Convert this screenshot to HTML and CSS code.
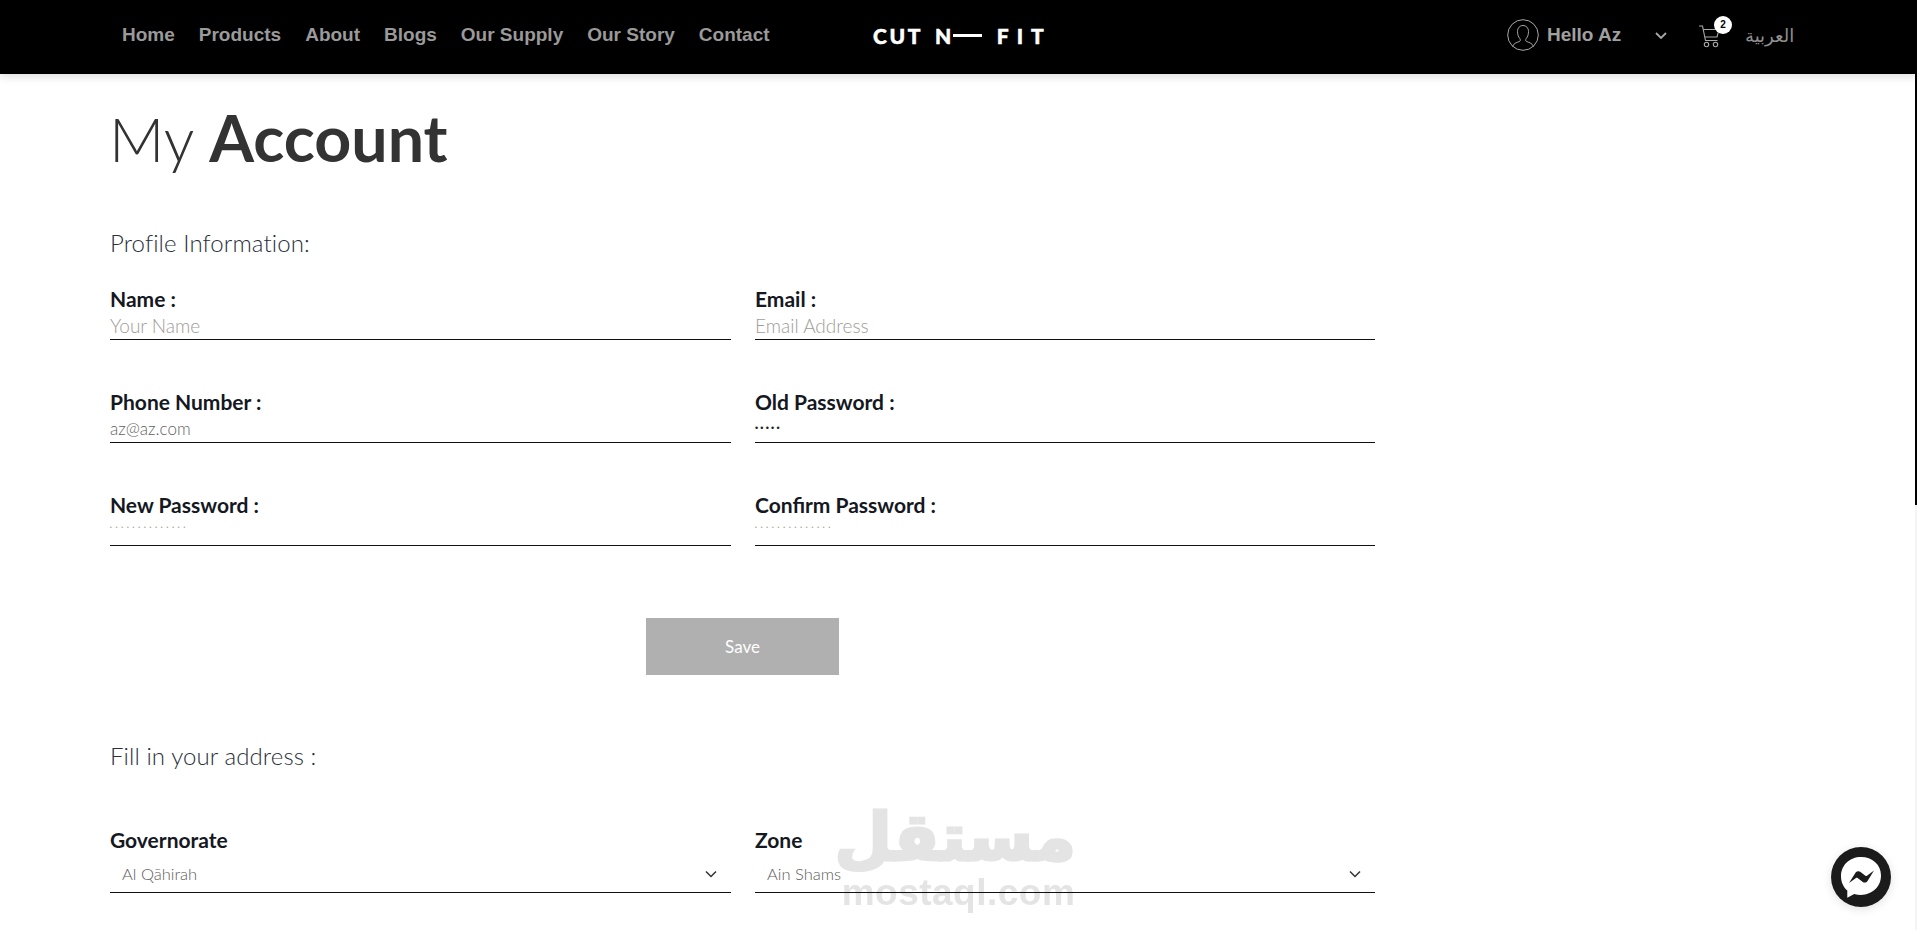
FILE: index.html
```html
<!DOCTYPE html>
<html lang="en">
<head>
<meta charset="utf-8">
<title>My Account</title>
<link rel="stylesheet" href="styles.css">
</head>
<body>
<header class="topbar">
  <nav class="nav">
    <a>Home</a><a>Products</a><a>About</a><a>Blogs</a><a>Our Supply</a><a>Our Story</a><a>Contact</a>
  </nav>
  <div class="logo"><span>CUT</span><span class="logo-n">N</span><i class="logo-dash"></i><span class="logo-fit">FIT</span></div>
  <div class="tools">
    <svg class="avatar" width="32" height="32" viewBox="0 0 32 32" fill="none" stroke="#a8a8a8" stroke-width="1"><circle cx="16" cy="16" r="15.3"/><path d="M5.5 27.5c1-3 4-4 7-5 1-.5 1-2 .3-3-1.500-1.800-2.300-4-2.300-7 0-3.500 2.300-6 5.500-6s5.500 2.500 5.500 6c0 3-.8 5.200-2.300 7-.7 1-.7 2.500.3 3 3 1 6 2 7 5"/></svg>
    <span class="hello">Hello Az</span>
    <svg class="chev" width="12" height="7" viewBox="0 0 12 7" fill="none" stroke="#a8a8a8" stroke-width="1.800"><path d="M1 1l5 5 5-5"/></svg>
    <span class="cart">
      <svg width="21" height="23" viewBox="0 0 21 23" fill="none" stroke="#a8a8a8" stroke-width="1.100"><path d="M0 1h3.500l3 14.500h12"/><path d="M4.200 4.500H20l-2 7.500H5.800"/><circle cx="7.500" cy="19.500" r="2.200"/><circle cx="16.500" cy="19.500" r="2.200"/></svg>
      <b class="badge">2</b>
    </span>
    <span class="lang" lang="ar" dir="rtl">العربية</span>
  </div>
</header>

<main class="page">
  <h1 class="title"><span class="title-light">My</span> <strong>Account</strong></h1>
  <h2 class="section section-profile">Profile Information:</h2>
  <div class="form-grid">
    <div class="field"><label>Name :</label><div class="input placeholder">Your Name</div></div>
    <div class="field"><label>Email :</label><div class="input placeholder">Email Address</div></div>
    <div class="field"><label>Phone Number :</label><div class="input value">az@az.com</div></div>
    <div class="field"><label>Old Password :</label><div class="input dots-dark">•••••</div></div>
    <div class="field"><label>New Password :</label><div class="input dots-light">••••••••••••••</div></div>
    <div class="field"><label>Confirm Password :</label><div class="input dots-light">••••••••••••••</div></div>
  </div>
  <div class="save-row"><button class="save">Save</button></div>
  <h2 class="section section-address">Fill in your address :</h2>
  <div class="form-grid form-grid-address">
    <div class="field"><label>Governorate</label><div class="input select"><span>Al Qāhirah</span><svg width="12" height="8" viewBox="0 0 12 8" fill="none" stroke="#333" stroke-width="1.500"><path d="M1 1.500l5 5 5-5"/></svg></div></div>
    <div class="field"><label>Zone</label><div class="input select"><span>Ain Shams</span><svg width="12" height="8" viewBox="0 0 12 8" fill="none" stroke="#333" stroke-width="1.500"><path d="M1 1.500l5 5 5-5"/></svg></div></div>
  </div>
</main>

<div class="watermark"><div class="wm-ar" lang="ar" dir="rtl">مستقل</div><div class="wm-en">mostaql.com</div></div>

<div class="messenger">
  <svg width="60" height="60" viewBox="0 0 60 60"><circle cx="30" cy="30" r="30" fill="#1b1b1b"/><path d="M30 10C18.700 10 10 18.200 10 29.300c0 5.800 2.400 10.800 6.300 14.300v7.200l6.900-3.800c2.100.6 4.400.9 6.800.9 11.300 0 20-8.200 20-19.300S41.300 10 30 10z" fill="#fff"/><path d="M18 36l6.500-10.300c1-1.600 3.200-2 4.700-.9l5.200 3.900c.5.400 1.100.4 1.600 0L43 23.600 36.500 34c-1 1.600-3.200 2-4.700.9l-5.200-3.900c-.5-.4-1.100-.4-1.600 0z" fill="#1b1b1b"/></svg>
</div>
<div class="scroll-track"><div class="scroll-thumb"></div></div>
</body>
</html>
```
FILE: styles.css
```css
* { box-sizing: border-box; }
html, body { margin: 0; height: 930px; overflow: hidden; background: #fff; }
body { font-family: "Lato", "Open Sans", sans-serif; color: #1c1c1c; }

.topbar {
  height: 74px;
  background: #000;
  display: flex;
  align-items: center;
  padding: 0 0 4px 122px;
  box-shadow: 0 3px 8px rgba(0,0,0,.12);
  position: relative;
}
.nav { display: flex; gap: 24px; width: 751px; font: 700 19px "Liberation Sans", sans-serif; color: #9a9a9a; }
.logo { display: flex; align-items: center; width: 634px; font: 900 21px "Lato", sans-serif; color: #fff; letter-spacing: 2.600px; -webkit-text-stroke: .5px #fff; }
.logo-n { margin-left: 12px; }
.logo-dash { width: 29px; height: 3px; background: #fff; margin-left: -1px; }
.logo-fit { margin-left: 15px; letter-spacing: 8px; }
.tools { display: flex; align-items: center; color: #a0a0a0; }
.avatar { margin-right: 8px; }
.hello { font: 700 19px "Liberation Sans", sans-serif; width: 108px; }
.chev { margin-right: 32px; }
.cart { position: relative; display: block; width: 46px; height: 23px; margin-top: 2px; }
.badge {
  position: absolute; left: 15px; top: -9px;
  width: 18px; height: 18px; border-radius: 50%;
  background: #fff; color: #000;
  font: 700 10px/18px "Liberation Sans", sans-serif; text-align: center;
}
.lang { font: 400 18px "DejaVu Sans", sans-serif; color: #8f8f8f; }

.page { padding: 0 0 0 110px; width: 1376px; }
.title { margin: 28px 0 0 -1px; height: 70px; font-size: 61px; line-height: 70px; font-weight: 300; color: #333; white-space: nowrap; }
.title strong { font-weight: 700; font-size: 64.500px; }
.section { margin: 0; font-weight: 300; font-size: 24px; letter-spacing: .1px; line-height: 30px; color: #2a2f3a; }
.section-profile { margin-top: 56px; }
.section-address { margin-top: 66px; }
.form-grid { display: grid; grid-template-columns: 621px 620px; column-gap: 24px; row-gap: 50px; margin-top: 29px; }
.form-grid-address { margin-top: 57px; }
label { display: block; font-weight: 700; font-size: 21px; line-height: 24px; color: #15181f; }
.input { height: 29px; border-bottom: 1px solid #111; display: flex; align-items: center; font-size: 19px; font-weight: 300; }
.placeholder { color: #a09c98; }
.value { color: #5f5f5f; font-size: 17px; }
.dots-dark { color: #222; font-size: 9px; letter-spacing: 2.200px; font-family: "DejaVu Sans", sans-serif; }
.dots-light { color: #a89c8e; font-size: 5px; letter-spacing: 3.900px; font-family: "DejaVu Sans", sans-serif; padding-bottom: 8px; }
.select { height: 41px; padding: 4px 14px 0 12px; justify-content: space-between; color: #5c5c5c; font-size: 16.500px; }
.save-row { margin-top: 72px; padding-left: 536px; }
.save { display: block; width: 193px; height: 57px; border: 0; background: #b0b0b0; color: #fff; font: 400 17px "Lato", sans-serif; }

.watermark { position: fixed; left: 841px; top: 800px; width: 235px; text-align: center; color: #e4e4e4; mix-blend-mode: multiply; pointer-events: none; }
.wm-ar { font: 700 66px/76px "DejaVu Sans", sans-serif; -webkit-text-stroke: 3px #e4e4e4; white-space: nowrap; }
.wm-en { font: 700 37px/33px "Liberation Sans", sans-serif; letter-spacing: .5px; white-space: nowrap; }

.messenger { position: fixed; left: 1831px; top: 847px; width: 60px; height: 60px; border-radius: 50%; box-shadow: 0 2px 10px rgba(0,0,0,.12); }
.messenger svg { display: block; }
.scroll-track { position: fixed; right: 0; top: 0; width: 2px; height: 930px; background: #f4f4f4; }
.scroll-thumb { width: 2px; height: 505px; background: #000; }
```
